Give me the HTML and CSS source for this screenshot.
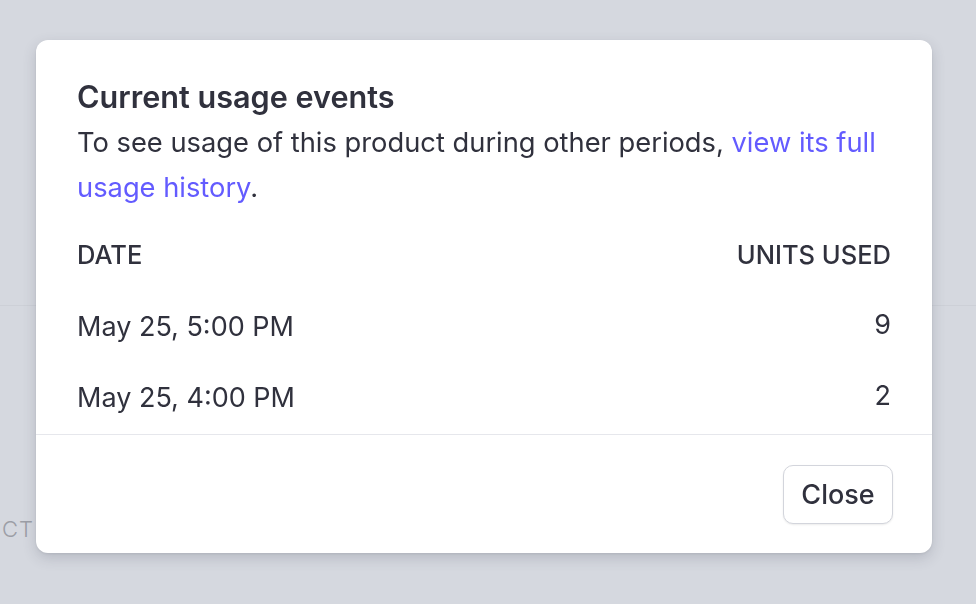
FILE: index.html
```html
<!DOCTYPE html>
<html>
<head>
<meta charset="utf-8">
<link rel="stylesheet" href="styles.css">
</head>
<body>
<div class="page">
  <div class="page-rule"></div>
  <div class="page-label">CT</div>
</div>
<div class="overlay">
  <div class="modal">
    <div class="modal-body">
      <h2 class="title">Current usage events</h2>
      <p class="desc">To see usage of this product during other periods, <a class="link" href="#">view its full usage history</a>.</p>
      <div class="table">
        <div class="row head"><span>DATE</span><span>UNITS USED</span></div>
        <div class="row"><span>May 25, 5:00 PM</span><span class="num">9</span></div>
        <div class="row"><span>May 25, 4:00 PM</span><span class="num">2</span></div>
      </div>
    </div>
    <div class="modal-footer">
      <button class="btn">Close</button>
    </div>
  </div>
</div>
</body>
</html>
```
FILE: styles.css
```css
* { box-sizing: border-box; }
html, body { margin: 0; height: 100%; }
body {
  background: #d5d8df;
  font-family: Inter, "Noto Sans", sans-serif;
  color: #30313d;
  overflow: hidden;
}
.page {
  height: 604px;
  display: flex;
  flex-direction: column;
}
.page-rule {
  margin-top: 305px;
  height: 1px;
  background: #cdd0d7;
}
.page-label {
  margin-top: 210px;
  margin-left: 2px;
  font-size: 22px;
  font-weight: 300;
  color: #9c9ea6;
  letter-spacing: 1px;
}
.overlay {
  position: fixed;
  inset: 0;
}
.modal {
  position: absolute;
  left: 36px;
  top: 40px;
  width: 896px;
  height: 513px;
  background: #fff;
  border-radius: 12px;
  box-shadow: 0 5px 14px rgba(60, 66, 87, 0.2), 0 1px 3px rgba(0,0,0,0.08);
  display: flex;
  flex-direction: column;
}
.modal-body {
  padding: 39px 41px 0 41px;
  border-bottom: 1px solid #e6e7ec;
  height: 395px;
}
.title {
  margin: 0;
  font-size: 30.6px;
  line-height: 36px;
  font-weight: 600;
}
.desc {
  margin: 5px 0 0;
  font-size: 27.3px;
  line-height: 45px;
  font-weight: 400;
}
.link { color: #635bff; text-decoration: none; }
.table { margin-top: 27px; }
.row {
  display: flex;
  justify-content: space-between;
  font-size: 27px;
  height: 71px;
  line-height: 36px;
}
.row.head {
  font-weight: 500;
  font-size: 25.5px;
  height: 71.5px;
}
.num { margin-top: -2px; }
.modal-footer {
  flex: 1;
  display: flex;
  justify-content: flex-end;
  align-items: center;
  padding-right: 39px;
}
.btn {
  font-family: inherit;
  font-size: 27px;
  font-weight: 500;
  color: #30313d;
  background: #fff;
  border: 1px solid #d3d5dc;
  border-radius: 10px;
  width: 110px;
  height: 59px;
  box-shadow: 0 1px 2px rgba(0,0,0,0.08);
}
```
